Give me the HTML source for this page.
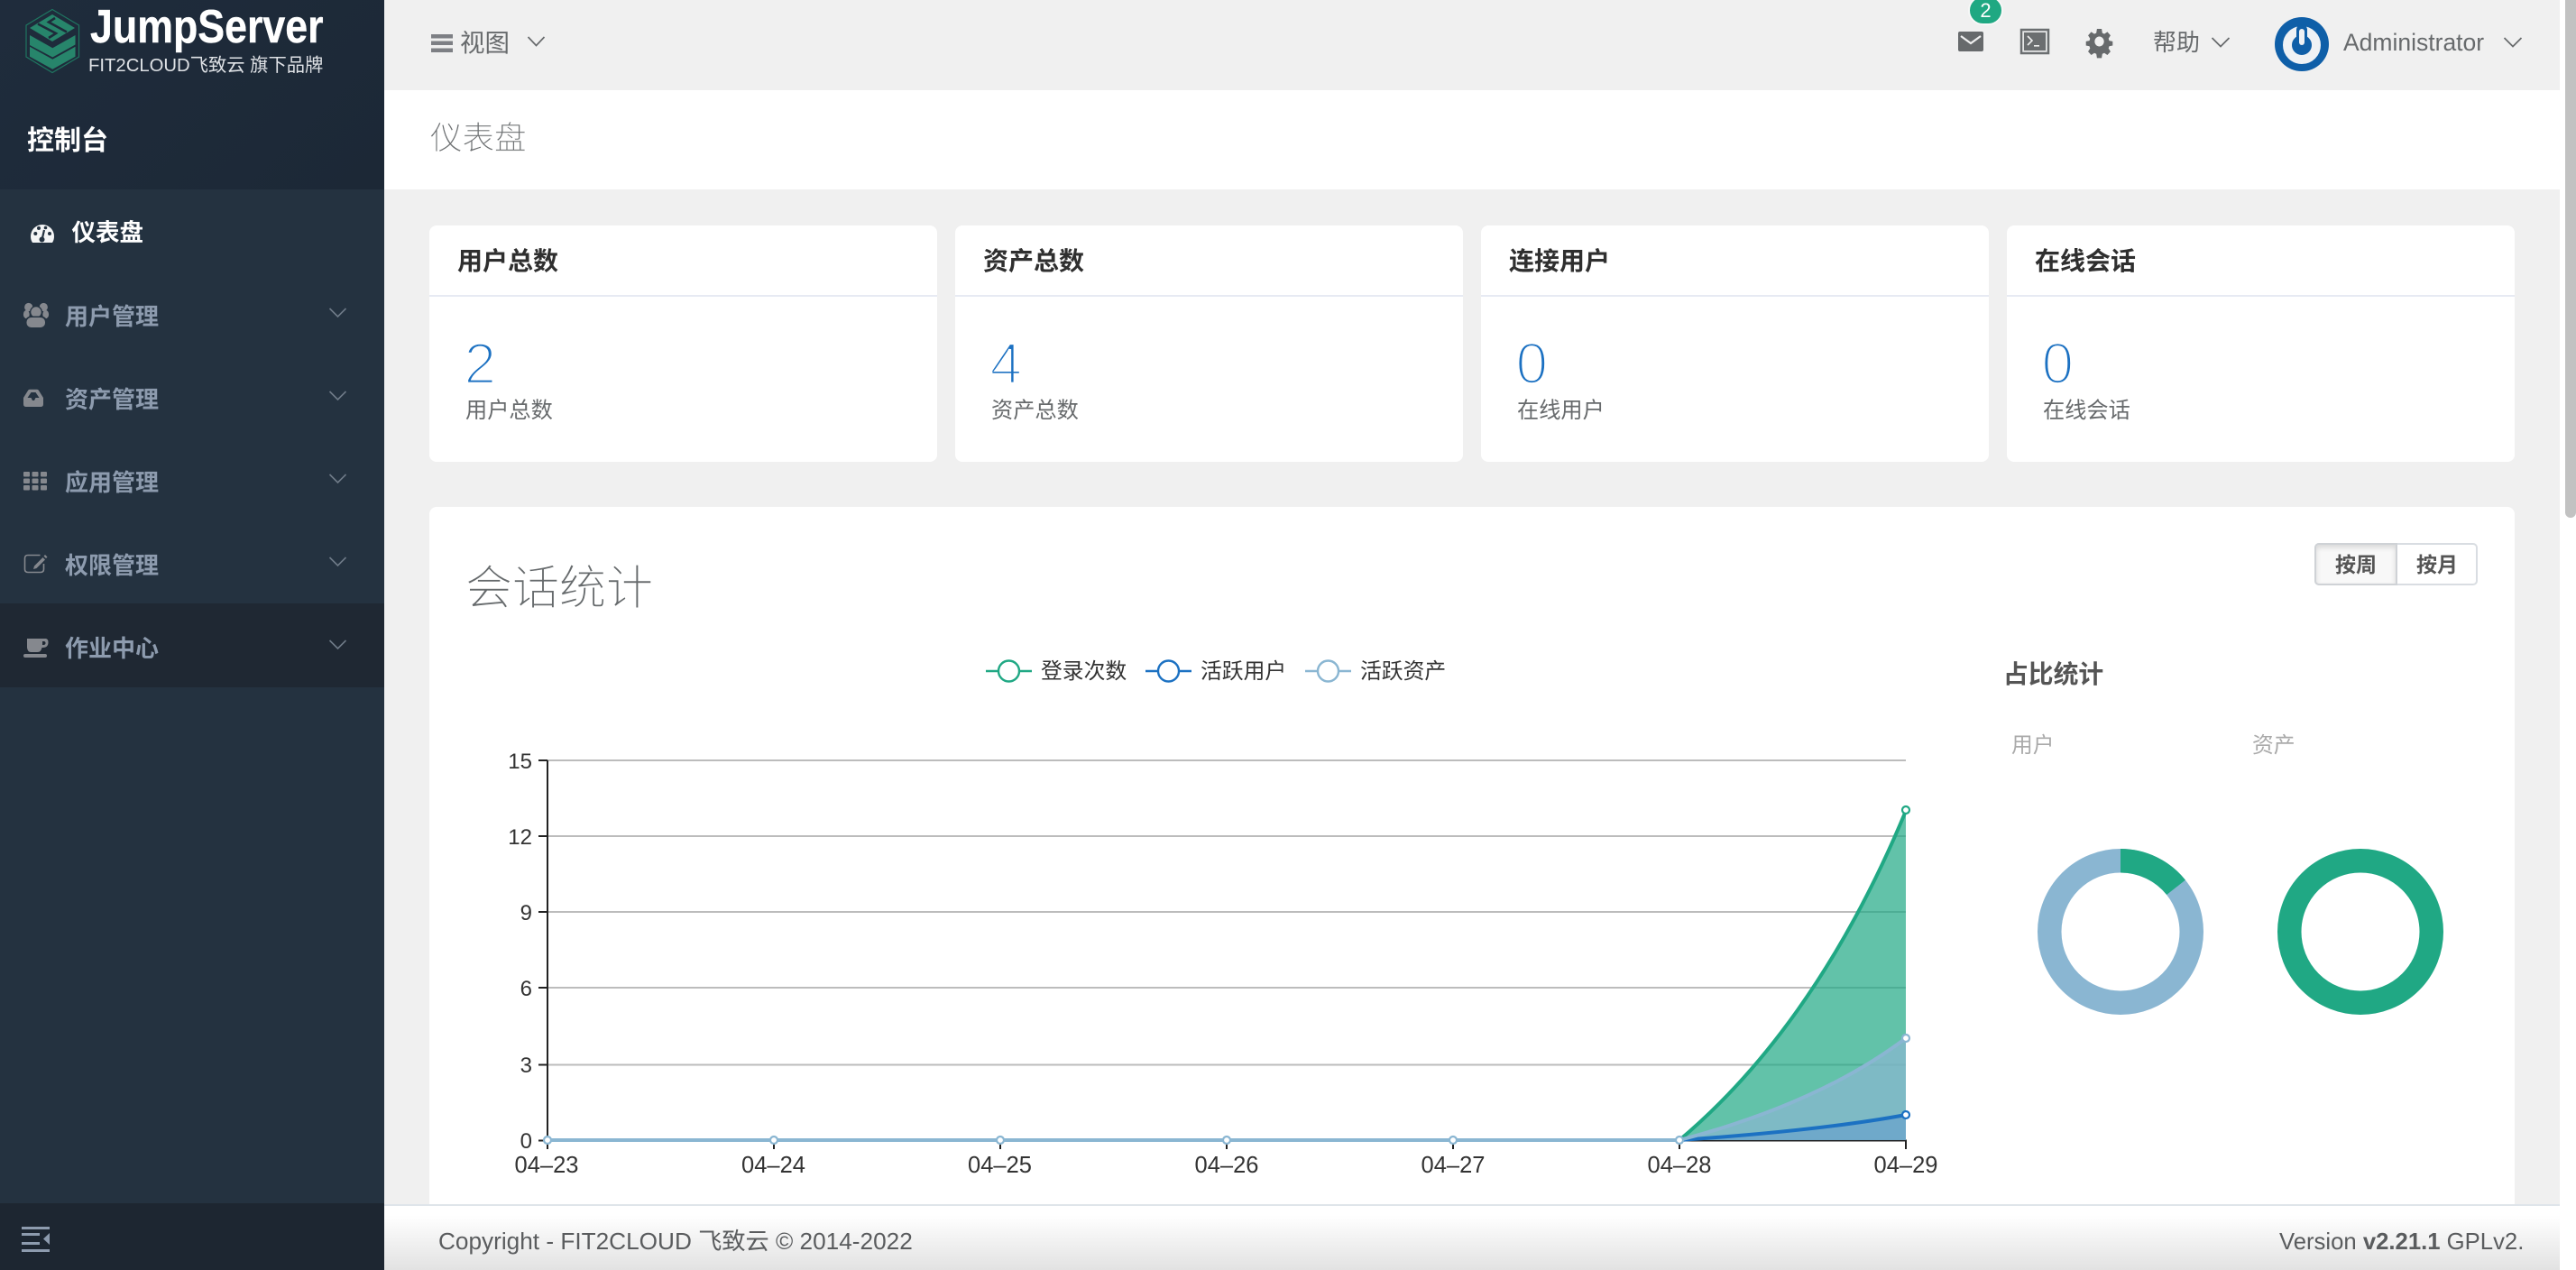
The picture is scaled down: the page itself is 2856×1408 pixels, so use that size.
<!DOCTYPE html>
<html lang="zh"><head><meta charset="utf-8"><title>仪表盘</title>
<style>
*{box-sizing:border-box}
html,body{margin:0;padding:0;width:2856px;height:1408px;overflow:hidden;background:#fff;font-family:"Liberation Sans","Noto Sans CJK SC",sans-serif}
.a{position:absolute}
.t{position:absolute;white-space:nowrap;line-height:40px;height:40px}
.nav{font-size:26px;font-weight:700;color:#8d9bae;left:72px}
.ct{font-size:28px;font-weight:700;color:#2f2f2f}
.cl{font-size:24.2px;color:#676a6c}
.num{font-size:64px;color:#1c71c2;line-height:60px;height:60px;-webkit-text-stroke:2.8px #fff}
.card{position:absolute;top:250px;width:563px;height:262px;background:#fff;border-radius:8px}
.card:after{content:"";position:absolute;left:0;right:0;top:77px;height:2px;background:#e7eaf3}
</style></head><body>
<div class="a" style="left:426px;top:0;width:2412px;height:1408px;background:#f0f0f0"></div>
<div class="a" style="left:426px;top:100px;width:2412px;height:110px;background:#fff"></div>
<div class="a" style="left:2844px;top:-8px;width:12px;height:582px;background:#c2c2c2;border-radius:0 0 6px 6px"></div>

<!-- sidebar -->
<div class="a" style="left:0;top:0;width:426px;height:1408px;background:#243240"></div>
<div class="a" style="left:0;top:0;width:426px;height:210px;background:linear-gradient(135deg,#1f2c3c,#1c2836)"></div>
<div class="a" style="left:0;top:669px;width:426px;height:93px;background:#1f2833"></div>
<div class="a" style="left:0;top:1334px;width:426px;height:74px;background:#1d2631"></div>

<svg class="a" style="left:0;top:0" width="426" height="1408" viewBox="0 0 426 1408">
<polygon points="58,10.5 87.5,28 87.5,63 58,80.5 29,63 29,28" fill="none" stroke="#1f7560" stroke-width="1.2"/>
<g fill="#27856b">
<polygon points="33,39 33,50 58.3,63.5 83.5,49.5 83.5,39 58.3,53.3"/>
<polygon points="33,51.7 33,62.7 58.3,76.7 83.5,62.7 83.5,51.7 58.3,65.7"/>
<polygon points="58,16 83,31 58,46 33,31"/>
</g>
<path d="M42 26.5 L62 37 L54 42 M74 35.5 L54 24.5 L61 20" fill="none" stroke="#1e2b3a" stroke-width="2.6"/>
<!-- gauge -->
<path d="M34 262 a13 13 0 0 1 26 0 q0 4-2 7 H36 q-2-3-2-7z" fill="#f4f5f6"/>
<g fill="#243240"><circle cx="39.300" cy="259" r="2"/><circle cx="43" cy="253" r="2"/><circle cx="50.500" cy="252.500" r="1.800"/><circle cx="55" cy="259" r="2"/><circle cx="46.500" cy="265.500" r="3"/></g>
<path d="M46.500 266 L49 255" stroke="#243240" stroke-width="2.200"/>
<g fill="#85888e" stroke="none">
<!-- users -->
<circle cx="31.700" cy="340.500" r="4.600"/><circle cx="48.300" cy="340.500" r="4.600"/>
<ellipse cx="29.300" cy="348.500" rx="3.400" ry="4.600"/><ellipse cx="50.700" cy="348.500" rx="3.400" ry="4.600"/>
<circle cx="40" cy="346" r="7" fill="#243240"/><circle cx="40" cy="346" r="5.700"/>
<rect x="27.800" y="350.500" width="24.400" height="14" rx="6.500" fill="#243240"/>
<rect x="29.500" y="352" width="20.500" height="11" rx="5"/>
<!-- inbox -->
<path fill-rule="evenodd" d="M26 441 L31 433 q.7-1.200 2-1.200 H41 q1.300 0 2 1.200 L48 441 V448 q0 3-3 3 H29 q-3 0-3-3z M30.500 441 L34.500 435 H39.500 L43.500 441 H39.500 L38 444 H36 L34.500 441z"/>
<!-- th -->
<rect x="26" y="523" width="7" height="5.500" rx="1"/><rect x="35.500" y="523" width="7" height="5.500" rx="1"/><rect x="45" y="523" width="7" height="5.500" rx="1"/>
<rect x="26" y="530.500" width="7" height="5.500" rx="1"/><rect x="35.500" y="530.500" width="7" height="5.500" rx="1"/><rect x="45" y="530.500" width="7" height="5.500" rx="1"/>
<rect x="26" y="538" width="7" height="5.500" rx="1"/><rect x="35.500" y="538" width="7" height="5.500" rx="1"/><rect x="45" y="538" width="7" height="5.500" rx="1"/>
<!-- edit -->
<path d="M50 615 l2.500 2.500 -1.500 1.500 -2.500-2.500z M47.500 618 l2.500 2.500 -9.500 9.500 -3.500 1 1-3.500z"/>
<!-- coffee -->
<path fill-rule="evenodd" d="M30 708 h21 q2.500 .5 2.500 4 q0 6-6 6 h-1 q-1 5-5 5 h-7 q-4 0-4.500-5z M47 711 v4 h1 q2.500 0 2.500-2 q0-2-2-2z"/>
<rect x="26" y="725" width="26" height="4" rx="2"/>
</g>
<path d="M44.500 615.500 H31 q-3.500 0-3.500 3.500 v12 q0 3.500 3.500 3.500 h14 q3.500 0 3.500-3.500 v-6" fill="none" stroke="#85888e" stroke-width="1.600"/>
<g fill="none" stroke="#6f7b88" stroke-width="1.600">
<path d="M365.500 342 L374.500 351 L383.500 342"/><path d="M365.500 434 L374.500 443 L383.500 434"/><path d="M365.500 526 L374.500 535 L383.500 526"/><path d="M365.500 618 L374.500 627 L383.500 618"/><path d="M365.500 710 L374.500 719 L383.500 710"/>
</g>
<g fill="#8d9bae">
<rect x="24" y="1360" width="31" height="3"/><rect x="24" y="1367" width="20" height="3"/><rect x="24" y="1377" width="20" height="3"/><rect x="24" y="1385" width="31" height="3"/>
<polygon points="55,1367 55,1380 48,1373.500"/>
</g>
</svg>

<div class="t" style="left:100px;top:5px;font-size:52px;font-weight:700;color:#fff;line-height:50px;height:50px;transform:scaleX(.86);transform-origin:0 50%;-webkit-text-stroke:.4px #fff">JumpServer</div>
<div class="t" style="left:98px;top:53px;font-size:20.300px;color:#dfe2e6">FIT2CLOUD飞致云 旗下品牌</div>
<div class="t" style="left:30px;top:137px;font-size:30px;font-weight:700;color:#fff">控制台</div>
<div class="t nav" style="left:79.500px;top:238px;font-size:26.500px;color:#fff">仪表盘</div>
<div class="t nav" style="top:330.500px">用户管理</div>
<div class="t nav" style="top:422.500px">资产管理</div>
<div class="t nav" style="top:514.500px">应用管理</div>
<div class="t nav" style="top:606.500px">权限管理</div>
<div class="t nav" style="top:698.500px">作业中心</div>

<!-- top nav -->
<svg class="a" style="left:426px;top:0" width="2430" height="100" viewBox="426 0 2430 100">
<g fill="#7d7f84"><rect x="478" y="38" width="24" height="4.500"/><rect x="478" y="45.500" width="24" height="4.500"/><rect x="478" y="53.500" width="24" height="4.500"/></g>
<g fill="none" stroke="#676a6c" stroke-width="1.700">
<path d="M585.500 41 L594.500 50.500 L603.500 41"/><path d="M2452.500 42 L2462 51.500 L2471.500 42"/><path d="M2776.500 42 L2786 51.500 L2795.500 42"/>
</g>
<!-- mail -->
<rect x="2171" y="35" width="28" height="22" rx="2" fill="#676a6c"/>
<path d="M2174 40 L2185 48 L2196 40" fill="none" stroke="#f0f0f0" stroke-width="2.200"/>
<!-- terminal -->
<rect x="2241" y="33" width="30" height="26" fill="#e6e7e7" stroke="#6b6e70" stroke-width="2.500"/>
<rect x="2244" y="36" width="24" height="20" fill="#6b6e70"/>
<path d="M2248 40 l5 5 -5 5" fill="none" stroke="#f0f0f0" stroke-width="1.600"/><rect x="2255" y="50" width="6" height="1.600" fill="#f0f0f0"/>
<!-- gear -->
<g transform="translate(2327.500 46) scale(.74 .78)" fill="#676a6c">
<path fill-rule="evenodd" d="M-3.500-18 h7 l1 6 3 1.300 4.600-3 4.700 5 -3 4.500 1 3 5.200 1 v6 l-5.200 1 -1 3 3 4.500 -4.700 5 -4.600-3 -3 1.300 -1 6 h-7 l-1-6 -3-1.300 -4.600 3 -4.700-5 3-4.500 -1-3 -5.200-1 v-6 l5.200-1 1-3 -3-4.500 4.700-5 4.600 3 3-1.300z M0-7 a7 7 0 1 0 .01 0z"/>
</g>
<!-- avatar -->
<circle cx="2552" cy="49" r="30" fill="#0f5fa8"/>
<circle cx="2552" cy="50" r="16" fill="none" stroke="#eff2f5" stroke-width="10"/>
<rect x="2546" y="27" width="12" height="26" rx="6" fill="#0f5fa8"/>
<rect x="2549" y="32" width="6" height="18" rx="3" fill="#eef1f4"/>
</svg>
<div class="a" style="left:2182px;top:-5px;width:39px;height:33px;border-radius:17px;background:#1fa882;border:2px solid #f7f7f7;color:#fff;font-size:22px;line-height:30px;text-align:center">2</div>
<div class="t" style="left:510px;top:28px;font-size:27.500px;color:#676a6c">视图</div>
<div class="t" style="left:2387px;top:27px;font-size:26px;color:#676a6c">帮助</div>
<div class="t" style="left:2598px;top:27px;font-size:26.500px;color:#676a6c">Administrator</div>

<div class="t" style="left:477px;top:128px;font-size:35.500px;font-weight:300;color:#6c6f71;line-height:50px;height:50px;-webkit-text-stroke:.4px #fff">仪表盘</div>

<!-- cards -->
<div class="card" style="left:476px"></div><div class="card" style="left:1059px"></div><div class="card" style="left:1642px"></div><div class="card" style="left:2225px"></div>
<div class="t ct" style="left:507px;top:270px">用户总数</div><div class="t ct" style="left:1090px;top:270px">资产总数</div><div class="t ct" style="left:1673px;top:270px">连接用户</div><div class="t ct" style="left:2256px;top:270px">在线会话</div>
<div class="t num" style="left:514.500px;top:373px">2</div><div class="t num" style="left:1097.500px;top:373px">4</div><div class="t num" style="left:1680.500px;top:373px">0</div><div class="t num" style="left:2263.500px;top:373px">0</div>
<div class="t cl" style="left:516px;top:436px">用户总数</div><div class="t cl" style="left:1099px;top:436px">资产总数</div><div class="t cl" style="left:1682px;top:436px">在线用户</div><div class="t cl" style="left:2265px;top:436px">在线会话</div>

<!-- main panel -->
<div class="a" style="left:476px;top:562px;width:2312px;height:800px;background:#fff;border-radius:8px 8px 0 0"></div>
<div class="t" style="left:516px;top:623px;font-size:52px;font-weight:300;color:#666a6c;line-height:60px;height:60px;-webkit-text-stroke:.6px #fff">会话统计</div>

<div class="a" style="left:2566px;top:602px;width:181px;height:47px;border:2px solid #d9dde2;border-radius:5px;background:#fff"></div>
<div class="a" style="left:2566px;top:602px;width:92px;height:47px;border:2px solid #cfd2d6;border-radius:5px 0 0 5px;background:#f8f8f8;box-shadow:inset 0 3px 6px rgba(0,0,0,.13)"></div>
<div class="t" style="left:2566px;top:606px;width:92px;text-align:center;font-size:23px;font-weight:700;color:#555">按周</div>
<div class="t" style="left:2657px;top:606px;width:90px;text-align:center;font-size:23px;font-weight:700;color:#555">按月</div>

<svg class="a" style="left:476px;top:562px" width="2312" height="800" viewBox="476 562 2312 800" font-family="'Liberation Sans','Noto Sans CJK SC',sans-serif">
<!-- legend -->
<g fill="#333" font-size="23.800"><text x="1154" y="752">登录次数</text><text x="1331" y="752">活跃用户</text><text x="1508" y="752">活跃资产</text></g>
<g fill="#fff" stroke-width="2.400">
<path d="M1093 744 H1144" stroke="#20a884"/><circle cx="1118.500" cy="744" r="11.500" stroke="#20a884"/>
<path d="M1270 744 H1321" stroke="#1c71c2"/><circle cx="1295.500" cy="744" r="11.500" stroke="#1c71c2"/>
<path d="M1447 744 H1498" stroke="#8ab6d2"/><circle cx="1472.500" cy="744" r="11.500" stroke="#8ab6d2"/>
</g>
<!-- grid -->
<g stroke="#bcbcbc" stroke-width="2"><path d="M607 843 H2113"/><path d="M607 927 H2113"/><path d="M607 1011 H2113"/><path d="M607 1095 H2113"/><path d="M607 1180.500 H2113"/></g>
<!-- axes -->
<g stroke="#222" stroke-width="2" fill="none">
<path d="M607 843 V1274"/><path d="M597 843 H607"/><path d="M597 927 H607"/><path d="M597 1011 H607"/><path d="M597 1095 H607"/><path d="M597 1180.500 H607"/><path d="M597 1264.500 H2114"/>
<path d="M607 1264 V1274"/><path d="M858 1264 V1274"/><path d="M1109 1264 V1274"/><path d="M1360 1264 V1274"/><path d="M1611 1264 V1274"/><path d="M1862 1264 V1274"/><path d="M2113 1264 V1274"/>
</g>
<g fill="#333" font-size="24" text-anchor="end"><text x="590" y="852">15</text><text x="590" y="936">12</text><text x="590" y="1020">9</text><text x="590" y="1104">6</text><text x="590" y="1189">3</text><text x="590" y="1273">0</text></g>
<g fill="#333" font-size="25.500" text-anchor="middle"><text x="606" y="1300">04–23</text><text x="857.500" y="1300">04–24</text><text x="1108.500" y="1300">04–25</text><text x="1360" y="1300">04–26</text><text x="1611" y="1300">04–27</text><text x="1862" y="1300">04–28</text><text x="2113" y="1300">04–29</text></g>
<!-- areas -->
<path d="M1862 1264 C1950 1190 2040 1075 2113 899 V1264 Z" fill="#20a884" fill-opacity=".7"/>
<path d="M1862 1264 C1950 1258 2040 1249.500 2113 1236 V1264 Z" fill="#1c71c2" fill-opacity=".7"/>
<path d="M1862 1264 C1950 1241 2040 1206 2113 1151 V1264 Z" fill="#8ab6d2" fill-opacity=".7"/>
<!-- lines -->
<path d="M607 1264 H1862 C1950 1190 2040 1075 2113 899" fill="none" stroke="#20a884" stroke-width="4"/>
<path d="M607 1264 H1862 C1950 1258 2040 1249.500 2113 1236" fill="none" stroke="#1c71c2" stroke-width="4"/>
<path d="M607 1264 H1862 C1950 1241 2040 1206 2113 1151" fill="none" stroke="#8ab6d2" stroke-width="4"/>
<g fill="#fff" stroke="#8ab6d2" stroke-width="2.200">
<circle cx="607" cy="1264" r="4"/><circle cx="858" cy="1264" r="4"/><circle cx="1109" cy="1264" r="4"/><circle cx="1360" cy="1264" r="4"/><circle cx="1611" cy="1264" r="4"/><circle cx="1862" cy="1264" r="4"/><circle cx="2113" cy="1151" r="4"/>
</g>
<circle cx="2113" cy="898" r="4" fill="#fff" stroke="#20a884" stroke-width="2.200"/>
<circle cx="2113" cy="1236" r="4" fill="#fff" stroke="#1c71c2" stroke-width="2.200"/>
<!-- right stats -->
<text x="2221" y="757" font-size="27.800" font-weight="700" fill="#555">占比统计</text>
<text x="2230" y="834" font-size="23.800" fill="#aaa">用户</text><text x="2497" y="834" font-size="23.800" fill="#aaa">资产</text>
<circle cx="2351" cy="1033" r="78.750" fill="none" stroke="#8ab6d2" stroke-width="26.500"/>
<path d="M2351 941 A92 92 0 0 1 2422.900 975.600 L2402.200 992 A65.500 65.500 0 0 0 2351 967.500 Z" fill="#20a884"/>
<circle cx="2617" cy="1033" r="78.750" fill="none" stroke="#20a884" stroke-width="26.500"/>
</svg>

<!-- footer -->
<div class="a" style="left:426px;top:1335px;width:2412px;height:73px;background:linear-gradient(#fff 15%,#e2e2e2);border-top:2px solid #dfe5ea"></div>
<div class="t" style="left:486px;top:1356px;font-size:26.200px;color:#5a5c5e">Copyright - FIT2CLOUD 飞致云 © 2014-2022</div>
<div class="t" style="left:2527px;top:1356.500px;font-size:25.700px;color:#5a5c5e">Version <b>v2.21.1</b> GPLv2.</div>
</body></html>
